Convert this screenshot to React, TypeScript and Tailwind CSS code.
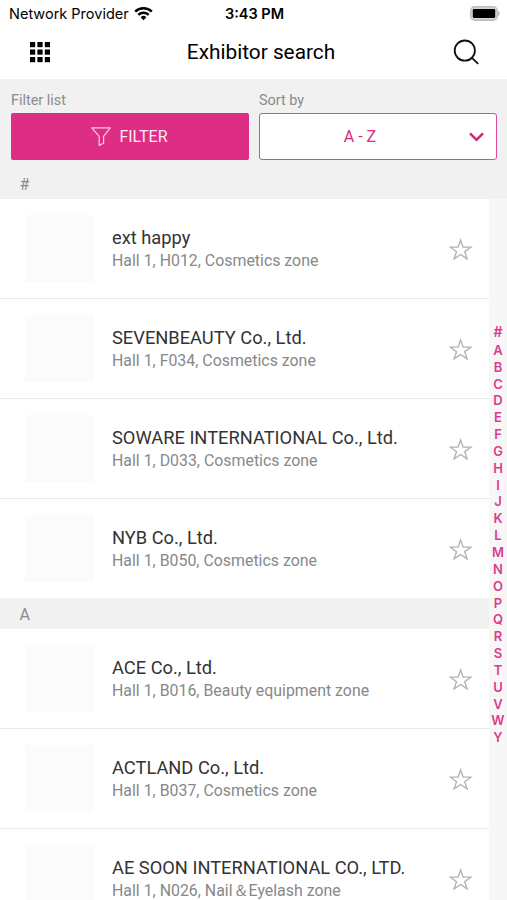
interface Exhibitor {
  name: string
  location: string
}

interface Section {
  title: string
  exhibitors: Exhibitor[]
}

const sections: Section[] = [
  {
    title: '#',
    exhibitors: [
      { name: 'ext happy', location: 'Hall 1, H012, Cosmetics zone' },
      { name: 'SEVENBEAUTY Co., Ltd.', location: 'Hall 1, F034, Cosmetics zone' },
      { name: 'SOWARE INTERNATIONAL Co., Ltd.', location: 'Hall 1, D033, Cosmetics zone' },
      { name: 'NYB Co., Ltd.', location: 'Hall 1, B050, Cosmetics zone' },
    ],
  },
  {
    title: 'A',
    exhibitors: [
      { name: 'ACE Co., Ltd.', location: 'Hall 1, B016, Beauty equipment zone' },
      { name: 'ACTLAND Co., Ltd.', location: 'Hall 1, B037, Cosmetics zone' },
      { name: 'AE SOON INTERNATIONAL CO., LTD.', location: 'Hall 1, N026, Nail＆Eyelash zone' },
    ],
  },
]

const letters = 'ABCDEFGHIJKLMNOPQRSTUVWY'.split('')

function StatusBar() {
  return (
    <div className="grid h-7 grid-cols-3 items-center pl-[9px] pr-[7px] font-['Inter',sans-serif] text-black">
      <div className="flex items-center gap-[5px] whitespace-nowrap text-[14.5px]">
        <span>Network Provider</span>
        <svg className="-mt-[2px]" width="19" height="15" viewBox="0 0 19 15" fill="none" stroke="currentColor" strokeWidth="2.4">
          <path d="M1.2 5.6a11.8 11.8 0 0 1 16.6 0" />
          <path d="M4.3 8.9a7.4 7.4 0 0 1 10.4 0" />
          <path d="M9.5 14.2l-2.9-2.9a4.1 4.1 0 0 1 5.8 0z" fill="currentColor" stroke="none" />
        </svg>
      </div>
      <div className="text-center text-[14.5px] font-semibold">3:43 PM</div>
      <svg className="-mt-[2px] justify-self-end" width="30" height="15" viewBox="0 0 30 15">
        <rect x="0.8" y="0.8" width="26.4" height="13.4" rx="3.8" fill="#d4d4d4" stroke="#bdbdbd" strokeWidth="1.4" />
        <rect x="2.8" y="2.9" width="22.4" height="9.2" rx="1.4" fill="#000" />
        <path d="M28.2 5v5c2-.9 2-4.1 0-5z" fill="#b5b5b5" />
      </svg>
    </div>
  )
}

function Header() {
  return (
    <header className="grid h-[51px] grid-cols-3 items-center pb-[3px] pl-[30px] pr-[27.5px] text-black">
      <svg width="20" height="21" viewBox="0 0 20 21" fill="currentColor">
        {[0, 7.5, 15].map((y) =>
          [0, 7.4, 14.8].map((x) => <rect key={`${x}-${y}`} x={x} y={y} width="5.2" height="5.2" />)
        )}
      </svg>
      <h1 className="pt-[2px] pl-[7px] whitespace-nowrap text-[20.8px]">Exhibitor search</h1>
      <svg className="justify-self-end" width="26" height="26" viewBox="0 0 26 26" fill="none" stroke="#111" strokeWidth="1.8">
        <circle cx="11.8" cy="11.6" r="10.1" />
        <path d="M18.9 18.8l6.3 6.1" />
      </svg>
    </header>
  )
}

function Filters() {
  return (
    <div className="grid h-[90px] grid-cols-2 gap-[10px] bg-[#f1f1f1] pt-[11px] pr-[10px] pl-[11px] text-[#8b8b8b]">
      <div>
        <div className="h-[23px] pt-px text-[14.4px] leading-5">Filter list</div>
        <button className="flex h-[47px] w-full items-center justify-center gap-2 rounded-xs bg-[#dd2d84] pr-px text-base text-[#ffe9f5]">
          <svg width="20" height="19" viewBox="0 0 20 19" fill="none" stroke="#ffc9e6" strokeWidth="1.2" strokeLinejoin="round">
            <path d="M.8.8h18.4l-6.6 8.6v6.8l-4.4 2.2v-9z" />
          </svg>
          FILTER
        </button>
      </div>
      <div>
        <div className="h-[23px] pt-px text-[14.4px] leading-5">Sort by</div>
        <button className="flex h-[47px] w-full items-center rounded-[3px] border border-[#dd4b95] bg-white pr-3 text-base text-[#d92c80]">
          <span className="flex-1 pr-[9px] text-center">A - Z</span>
          <svg width="15" height="10" viewBox="0 0 15 10" fill="none" stroke="#cf2375" strokeWidth="2.4">
            <path d="M1 1.3l6.5 6.5L14 1.3" />
          </svg>
        </button>
      </div>
    </div>
  )
}

function ExhibitorRow({ exhibitor }: { exhibitor: Exhibitor }) {
  return (
    <li className="flex h-[100px] items-center border-b border-[#e9e9e9] pl-[25px] pr-[34px] last:border-[#f1f1f1]">
      <div className="h-[67px] w-[69px] shrink-0 bg-[#fbfbfb]" />
      <div className="ml-[18px] flex-1 whitespace-nowrap">
        <div className="text-[18.3px] leading-6 text-[#333]">{exhibitor.name}</div>
        <div className="text-[15.9px] leading-[22px] text-[#888]">{exhibitor.location}</div>
      </div>
      <svg width="24" height="22" viewBox="0 0 24 22" fill="none" stroke="#b4b4b4" strokeWidth="1.4">
        <path d="M11.6 2l2.5 7.1h7.9l-6.3 4.6 2.4 7.2-6.5-4.4-6.5 4.4 2.4-7.2-6.3-4.6h7.9z" />
      </svg>
    </li>
  )
}

export default function App() {
  return (
    <div className="relative h-[900px] w-[507px] overflow-hidden bg-white font-['Roboto',sans-serif]">
      <StatusBar />
      <Header />
      <Filters />
      {sections.map((section) => (
        <section key={section.title}>
          <h2 className="flex h-[30px] items-center bg-[#f1f1f1] pt-px pl-[19.5px] text-base text-[#8b8b8b]">{section.title}</h2>
          <ul>
            {section.exhibitors.map((exhibitor) => (
              <ExhibitorRow key={exhibitor.name} exhibitor={exhibitor} />
            ))}
          </ul>
        </section>
      ))}

      {/* alphabet index floating over the list */}
      <nav className="absolute top-[199px] right-0 bottom-0 flex w-[18px] flex-col items-center bg-[#f6f6f6]/90 pt-[124.5px] font-['Inter',sans-serif] text-[13px] leading-[16.85px] font-semibold text-[#dc3c8d]">
        <a className="mb-[1.5px] text-[14px]">#</a>
        {letters.map((letter) => (
          <a key={letter}>{letter}</a>
        ))}
      </nav>
    </div>
  )
}
